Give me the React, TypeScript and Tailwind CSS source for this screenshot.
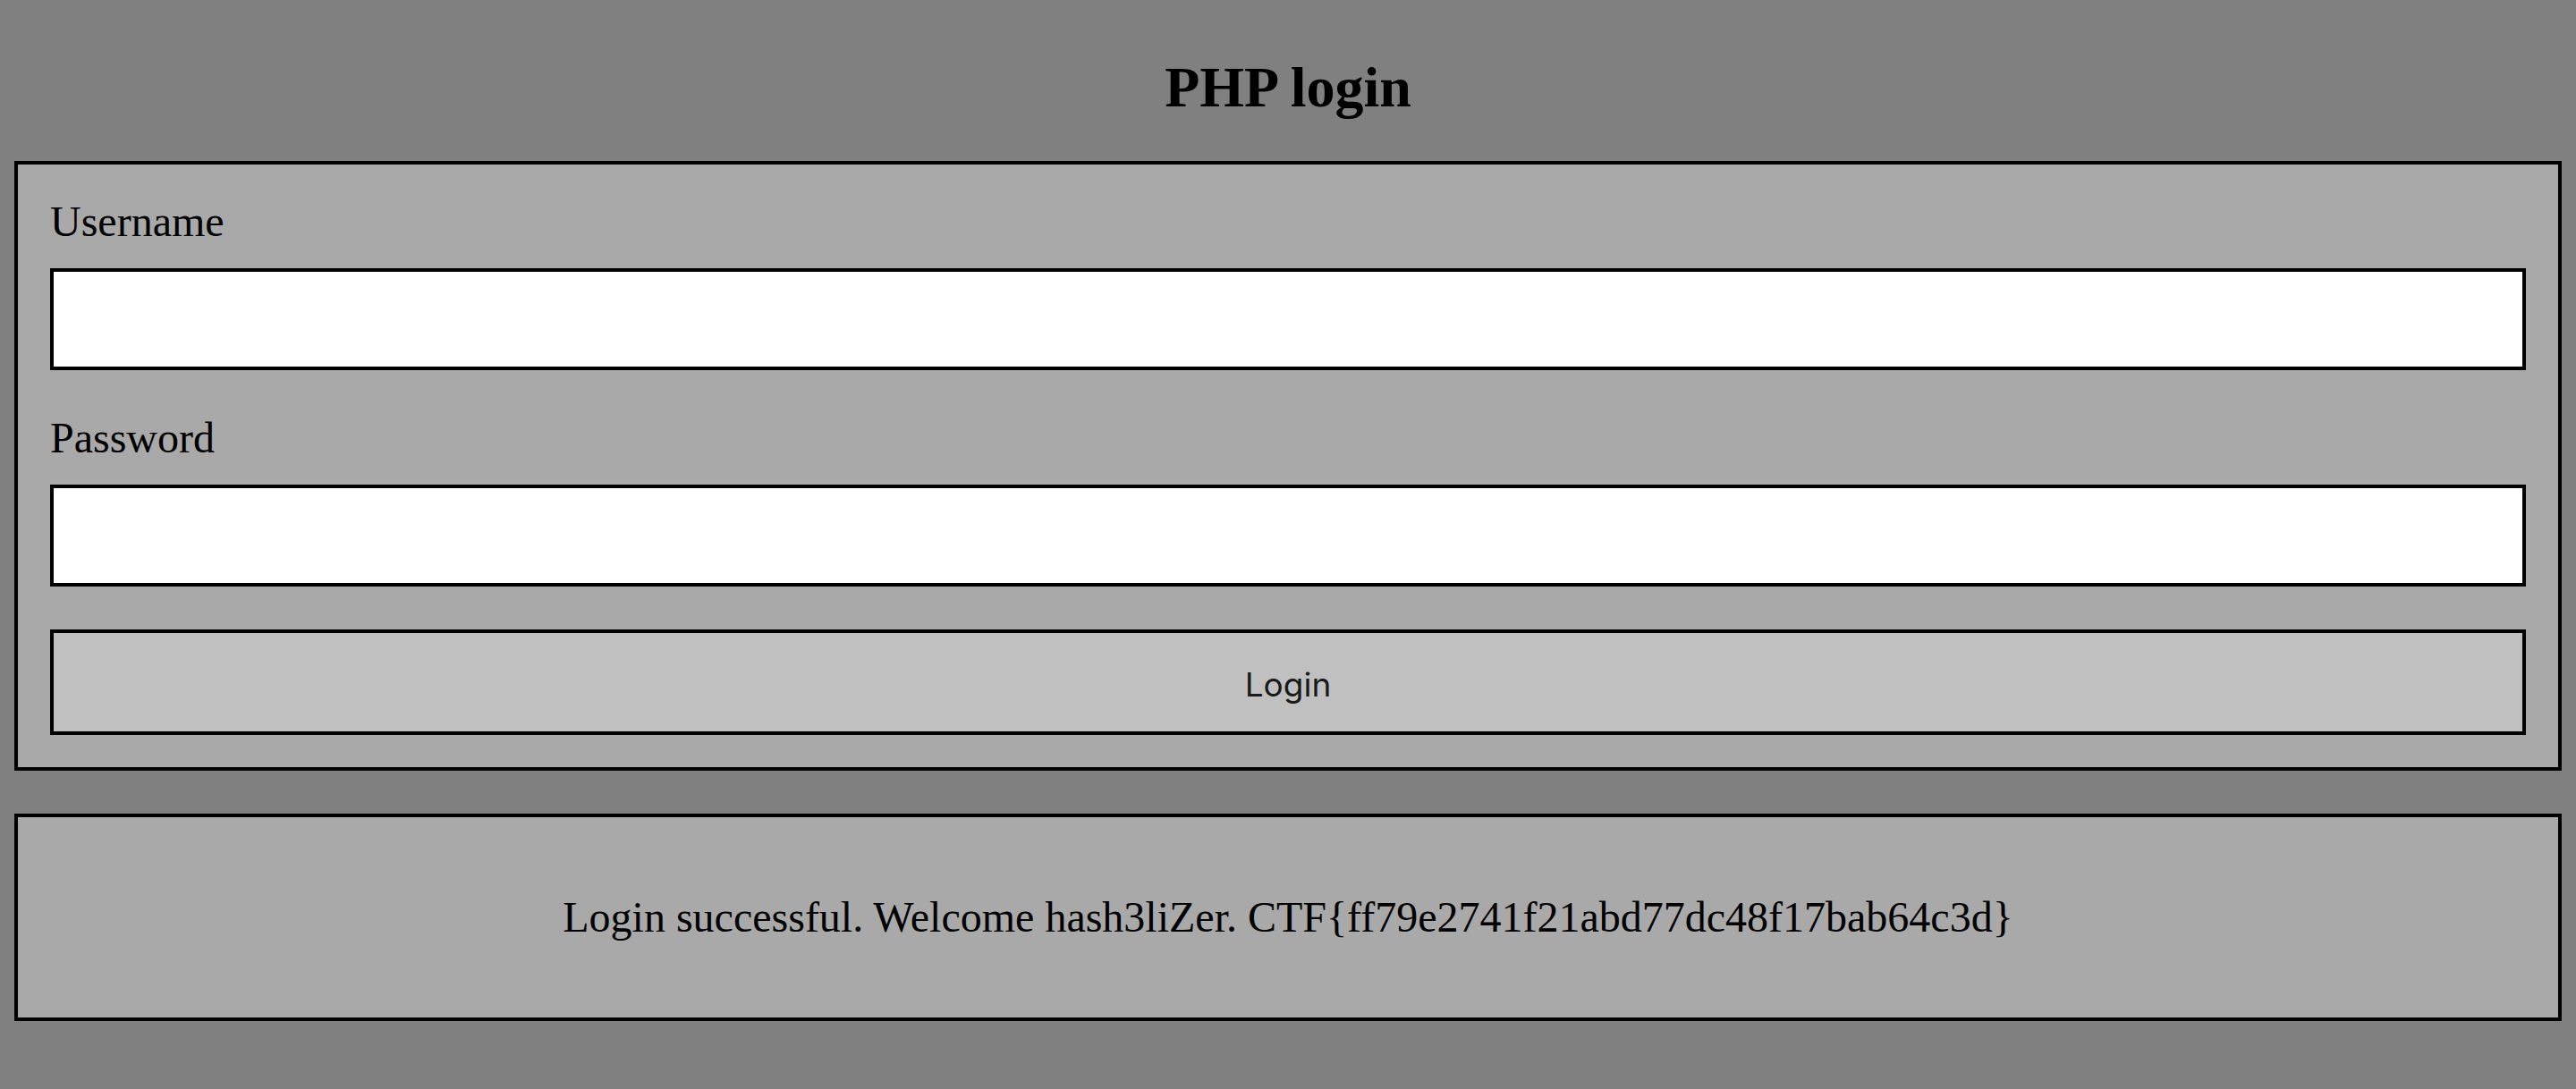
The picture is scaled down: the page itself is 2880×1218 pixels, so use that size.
const serif = "font-['Liberation_Serif','Times_New_Roman',serif]";

const Field = ({ label, type }: { label: string; type: string }) => (
  <div className="flex flex-col">
    <label className="text-[48px] leading-[56px] text-black">{label}</label>
    <input
      type={type}
      className="mt-[24px] h-[114px] w-full border-4 border-black bg-white px-2 outline-none"
    />
  </div>
);

export default function App() {
  return (
    <div className={`min-h-screen bg-[#808080] px-[16px] pt-[58px] pb-[76px] ${serif}`}>
      <h1 className="mb-[42px] text-center text-[64px] font-bold leading-[80px] text-black">
        PHP login
      </h1>

      <form
        className="flex flex-col gap-[48px] border-4 border-black bg-[#a9a9a9] p-[36px]"
        onSubmit={(e) => e.preventDefault()}
      >
        <Field label="Username" type="text" />
        <Field label="Password" type="password" />
        <button
          type="submit"
          className="h-[118px] w-full border-4 border-black bg-[#c0c0c0] pt-[6px] font-['Inter','Liberation_Sans',sans-serif] text-[37px] text-[#1a1a1a]"
        >
          Login
        </button>
      </form>

      <div className="mt-[48px] flex h-[232px] items-center justify-center border-4 border-black bg-[#a9a9a9]">
        <p className="text-[48px] leading-[56px] text-black">
          Login successful. Welcome hash3liZer. CTF{"{"}ff79e2741f21abd77dc48f17bab64c3d{"}"}
        </p>
      </div>
    </div>
  );
}
